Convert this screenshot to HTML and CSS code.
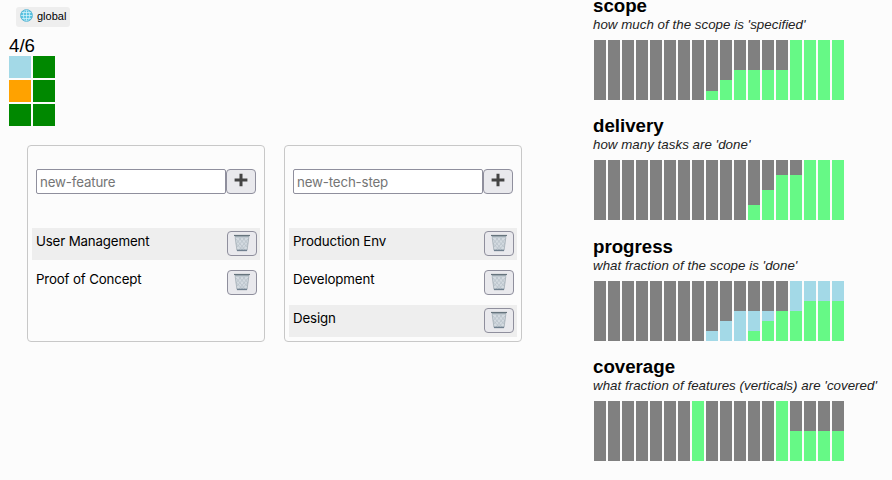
FILE: index.html
```html
<!DOCTYPE html>
<html lang="en">
<head>
<meta charset="utf-8">
<title>global</title>
<link rel="stylesheet" href="styles.css">
</head>
<body>
<svg class="defs" aria-hidden="true">
  <symbol id="bin" viewBox="0 0 18 18">
    <path d="M1.6 2h14.8l-2.2 14.5H3.8z" fill="#d3dae0"/>
    <path d="M3 5l9 11M6 4l8 9M10 4l5 6M3.5 10l6 6M15 5l-9 11M12 4l-8 9M8 4l-5 6M14.5 10l-6 6" stroke="#b3bdc5" stroke-width=".7" fill="none"/>
    <path d="M2.2 3.5l1.7 12.5M15.8 3.5l-1.7 12.5" stroke="#a3adb5" stroke-width=".8"/>
    <path d="M1 1.5h16" stroke="#66747d" stroke-width="1.2"/>
    <path d="M2 2.7h14" stroke="#98a5ad" stroke-width="1.2"/>
    <path d="M3.9 16.4h10.2" stroke="#70808f" stroke-width="1.5"/>
  </symbol>
  <symbol id="plus" viewBox="0 0 14 14"><path d="M7 .8v12.4M.6 7h12.8" stroke="#444" stroke-width="3"/></symbol>
</svg>
<main class="page">
  <section class="board">
    <a class="tag"><svg class="globe" viewBox="0 0 14 14"><circle cx="7" cy="7" r="6.5" fill="#5bc4e2"/><g fill="none" stroke="#e0f7fc" stroke-width=".75"><ellipse cx="7" cy="7" rx="3.3" ry="6.4"/><path d="M7 .5v13M.5 7h13M1.5 3.8h11M1.5 10.2h11"/></g><circle cx="7" cy="7" r="6.4" fill="none" stroke="#48a9c9" stroke-width=".7"/></svg><span>global</span></a>
    <div class="score">4/6</div>
    <div class="cells"><i class="spec"></i><i></i><i class="doing"></i><i></i><i></i><i></i></div>
    <div class="panels">
      <div class="panel">
        <form class="add"><input placeholder="new-feature"><button type="button" aria-label="add"><svg class="plus"><use href="#plus"/></svg></button></form>
        <ul>
          <li><span>User Management</span><button aria-label="remove"><svg class="bin"><use href="#bin"/></svg></button></li>
          <li><span>Proof of Concept</span><button aria-label="remove"><svg class="bin"><use href="#bin"/></svg></button></li>
        </ul>
      </div>
      <div class="panel">
        <form class="add"><input placeholder="new-tech-step"><button type="button" aria-label="add"><svg class="plus"><use href="#plus"/></svg></button></form>
        <ul>
          <li><span>Production Env</span><button aria-label="remove"><svg class="bin"><use href="#bin"/></svg></button></li>
          <li><span>Development</span><button aria-label="remove"><svg class="bin"><use href="#bin"/></svg></button></li>
          <li><span>Design</span><button aria-label="remove"><svg class="bin"><use href="#bin"/></svg></button></li>
        </ul>
      </div>
    </div>
  </section>
  <section class="charts">
    <article><h2>scope</h2><p>how much of the scope is 'specified'</p>
      <div class="chart" data-done="0,0,0,0,0,0,0,0,9,20,30,30,30,30,60,60,60,60"></div></article>
    <article><h2>delivery</h2><p>how many tasks are 'done'</p>
      <div class="chart" data-done="0,0,0,0,0,0,0,0,0,0,0,15,30,45,45,60,60,60"></div></article>
    <article><h2>progress</h2><p>what fraction of the scope is 'done'</p>
      <div class="chart" data-done="0,0,0,0,0,0,0,0,0,0,0,10,20,30,30,40,40,40" data-spec="0,0,0,0,0,0,0,0,10,20,30,20,10,0,30,20,20,20"></div></article>
    <article><h2>coverage</h2><p>what fraction of features (verticals) are 'covered'</p>
      <div class="chart" data-done="0,0,0,0,0,0,0,60,0,0,0,0,0,60,30,30,30,30"></div></article>
  </section>
</main>
<script src="charts.js"></script>
</body>
</html>
```
FILE: styles.css
```css
* { box-sizing: border-box; }
body { margin: 0; background: #fcfcfc; color: #000; font-family: "Liberation Sans", sans-serif; overflow: hidden; }
.defs { display: none; }
.page { display: flex; height: 480px; overflow: hidden; }
.board { width: 593px; padding: 7px 0 0 9px; }
.tag { display: flex; align-items: center; width: 54px; height: 20px; margin-left: 7px; padding-left: 4px; gap: 4px; border-radius: 3px; background: #eee; font-size: 11px; white-space: nowrap; }
.tag span { line-height: 18px; height: 20px; }
.globe { width: 13px; height: 13px; margin-top: -3px; flex: none; }
.score { height: 21px; margin-top: 8px; font-size: 18.7px; line-height: 21px; }
.cells { display: grid; grid-template-columns: 22px 22px; grid-auto-rows: 22px; gap: 2px; }
.cells i { background: #008800; }
.cells .spec { background: #a3d9e7; }
.cells .doing { background: #ffa200; }
.panels { display: flex; gap: 19px; margin: 19px 0 0 18px; }
.panel { width: 238px; height: 197px; padding: 23px 4px 0; border: 1px solid #c8c8c8; border-radius: 4px; font: 13.3px Inter, sans-serif; }
.add { display: flex; margin: 0 0 34px 4px; }
input { width: 190px; height: 25px; padding: 0 0 0 3px; border: 1px solid #8f8f9d; border-radius: 2px; background: #fff; font: inherit; }
input::placeholder { color: #757575; opacity: 1; letter-spacing: -.15px; }
button { display: flex; justify-content: center; width: 30px; height: 25px; padding: 2px 1px 0 0; border: 1px solid #8f8f9d; border-radius: 4px; background: #e9e9ed; }
.plus { width: 14px; height: 14px; margin-top: 1px; }
.bin { width: 18px; height: 18px; }
ul { display: grid; gap: 6.5px; margin: 0; padding: 0; list-style: none; }
li { display: flex; justify-content: space-between; height: 32px; padding: 3px 3px 0 4px; }
li:nth-child(odd) { background: #eee; }
li span { line-height: 20.8px; letter-spacing: -.15px; }
li:nth-child(even) span { line-height: 19.6px; }
.charts { flex: 1; padding-top: 40px; margin-top: -45px; }
article { height: 120px; margin-bottom: .4px; }
h2 { margin: 0; height: 22px; font-size: 18.7px; line-height: 21px; }
p { margin: 0; height: 15px; font-size: 13.3px; line-height: 15px; font-style: italic; color: #222; white-space: nowrap; letter-spacing: .035px; }
article:nth-child(2) p { line-height: 16.6px; }
.chart { display: flex; gap: 2px; margin: 8px 0 0 1px; }
.bar { display: flex; flex-direction: column; justify-content: flex-end; width: 12px; height: 60px; background: #808080; }
.done { background: #66f986; }
.spec { background: #a3d9e7; }
```
FILE: charts.js
```js
document.querySelectorAll('.chart').forEach(chart => {
  const done = chart.dataset.done.split(',');
  const spec = (chart.dataset.spec || '').split(',');
  done.forEach((value, i) => {
    const bar = document.createElement('div');
    bar.className = 'bar';
    [['spec', spec[i] || 0], ['done', value]].forEach(([kind, height]) => {
      const part = document.createElement('div');
      part.className = kind;
      part.style.height = height + 'px';
      bar.append(part);
    });
    chart.append(bar);
  });
});
```
